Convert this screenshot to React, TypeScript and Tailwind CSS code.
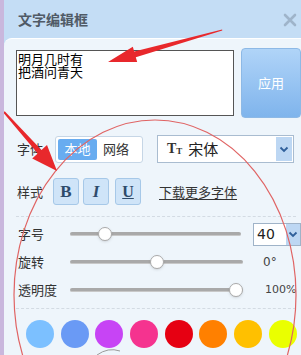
import React from 'react';

const colors = ['#7cc0ff', '#6a9af5', '#c744f5', '#f5338f', '#e60012', '#ff8000', '#ffc000', '#eaff00'];

const Chevron = () => (
  <svg width="10" height="7" viewBox="0 0 10 7">
    <path d="M1.5 1.5 L5 5 L8.5 1.5" fill="none" stroke="#2f5f9a" strokeWidth="1.8" />
  </svg>
);

// slider row: track is 173px wide, thumb offset given in px
const SliderRow = ({ label, thumb, children }: { label: string; thumb: string; children?: React.ReactNode }) => (
  <div className="flex items-center h-[28px]">
    <div className="w-[54px] pl-[2px] text-[13px] text-[#333]">{label}</div>
    <div className="relative w-[173px] h-[14px] flex items-center">
      <div className="w-full h-[4px] rounded-full bg-[#a9a9a9] border-b border-[#c8c8c8]"></div>
      <div className={`absolute top-0 ${thumb} w-[14px] h-[14px] rounded-full bg-white border border-[#aaa] shadow-sm`}></div>
    </div>
    {children}
  </div>
);

export default function App() {
  return (
    <div className="relative w-[301px] h-[355px] overflow-hidden bg-[#c4ddf5] border-l-4 border-[#c9b7dd] font-['Noto_Sans_CJK_SC',sans-serif]">
      {/* header */}
      <div className="h-[38px] flex items-center justify-between pl-[14px] pr-[4px]">
        <span className="text-[14px] font-bold text-[#505a66]">文字编辑框</span>
        <svg width="14" height="14" viewBox="0 0 14 14" className="mt-[2px]">
          <path d="M2 2 L12 12 M12 2 L2 12" stroke="#9fb4ca" strokeWidth="2.6" strokeLinecap="round" />
        </svg>
      </div>

      {/* body */}
      <div className="h-[317px] bg-[#eef5fb] rounded-tl-[8px] border-t border-white pl-[12px] pt-[9px]">
        <div className="flex items-start gap-[7px]">
          <div className="mt-[2px] w-[222px] h-[66px] border border-[#555] bg-white pl-[1px] pt-[1px] text-[13px] leading-[13px] text-black">
            <div>明月几时有</div>
            <div>把酒问青天</div>
          </div>
          <div className="w-[60px] h-[70px] shrink-0 rounded-[4px] border border-[#8db9e6] bg-gradient-to-b from-[#b0d4f8] to-[#7fb4ec] flex items-center justify-center text-white text-[13px]">
            应用
          </div>
        </div>

        {/* font row */}
        <div className="flex items-center h-[28px] mt-[17px]">
          <div className="w-[39px] pl-[1px] text-[13px] text-[#333]">字体</div>
          <div className="w-[88px] h-[27px] flex items-center bg-white border border-[#c6d6e6] rounded-[3px] p-[2px]">
            <div className="w-[39px] h-full rounded-[2px] bg-[#68acf0] text-white text-[13px] flex items-center justify-center">本地</div>
            <div className="pl-[6px] text-[13px] text-[#333]">网络</div>
          </div>
          <div className="ml-[14px] w-[137px] h-[28px] flex items-center bg-white border border-[#a9bcd0]">
            <span className="ml-[9px] flex items-end font-['Liberation_Serif',serif] font-bold text-[#333] leading-none">
              <span className="text-[14px]">T</span>
              <span className="text-[9px]">T</span>
            </span>
            <span className="ml-[6px] text-[15px] text-[#222]">宋体</span>
            <div className="ml-auto mr-[1px] w-[16px] h-[24px] bg-[#bdd7f3] flex items-center justify-center">
              <Chevron />
            </div>
          </div>
        </div>

        {/* style row */}
        <div className="flex items-center h-[27px] mt-[15px]">
          <div className="w-[37px] pl-[1px] text-[13px] text-[#333]">样式</div>
          <div className="w-[26px] h-[27px] rounded-[3px] bg-[#cfe4f8] border border-[#a6c8e8] flex items-center justify-center font-['Liberation_Serif',serif] font-bold text-[17px] text-[#2e4b6b]">B</div>
          <div className="ml-[4px] w-[26px] h-[27px] rounded-[3px] bg-[#cfe4f8] border border-[#a6c8e8] flex items-center justify-center font-['Liberation_Serif',serif] italic font-bold text-[17px] text-[#2e4b6b]">I</div>
          <div className="ml-[6px] w-[26px] h-[27px] rounded-[3px] bg-[#cfe4f8] border border-[#a6c8e8] flex items-center justify-center font-['Liberation_Serif',serif] font-bold underline text-[16px] text-[#2e4b6b]">U</div>
          <div className="ml-[18px] text-[13px] text-[#333] underline underline-offset-2">下载更多字体</div>
        </div>

        <div className="mt-[11px] mr-[5px] border-t border-dashed border-[#d3dbe3]"></div>

        {/* sliders */}
        <div className="mt-[3px]">
          <SliderRow label="字号" thumb="left-[28px]">
            <div className="ml-[12px] w-[48px] h-[23px] flex items-center bg-white border border-[#9fb3c8] shrink-0">
              <span className="pl-[3px] text-[14px] text-[#222] font-['DejaVu_Sans',sans-serif]">40</span>
              <div className="ml-auto w-[14px] h-full bg-[#bdd7f3] flex items-center justify-center">
                <Chevron />
              </div>
            </div>
          </SliderRow>
          <SliderRow label="旋转" thumb="left-[80px]">
            <span className="ml-[20px] text-[12px] text-[#444] font-['DejaVu_Sans',sans-serif]">0°</span>
          </SliderRow>
          <SliderRow label="透明度" thumb="left-[159px]">
            <span className="ml-[22px] text-[11px] text-[#444] font-['DejaVu_Sans',sans-serif]">100%</span>
          </SliderRow>
        </div>

        <div className="mt-[4px] mr-[5px] border-t border-dashed border-[#d3dbe3]"></div>

        {/* colours */}
        <div className="flex gap-[6.7px] mt-[11px] pl-[10px]">
          {colors.map((c) => (
            <div key={c} className="w-[28px] h-[28px] rounded-full shrink-0" style={{ backgroundColor: c }}></div>
          ))}
        </div>
      </div>

      {/* red annotations drawn on top of the screenshot */}
      <svg className="absolute top-0 left-[-4px] pointer-events-none" width="301" height="355" viewBox="0 0 301 355">
        <ellipse cx="155" cy="295" rx="141" ry="175" fill="none" stroke="#e06464" strokeWidth="1.2" />
        <polygon
          points="222.1,29.4 222.3,30.6 135.8,57.3 137.2,62.1 108,62 132.8,46.7 134.2,51.5"
          fill="#e8282c"
        />
        <polygon
          points="4.7,111.3 41.5,150.0 47.0,145.0 57,171 32.2,158.4 37.7,153.4 3.3,112.7"
          fill="#e8282c"
        />
        <path d="M97 355 Q108 347 120 351" fill="none" stroke="#9a9a9a" strokeWidth="1" />
      </svg>
    </div>
  );
}
